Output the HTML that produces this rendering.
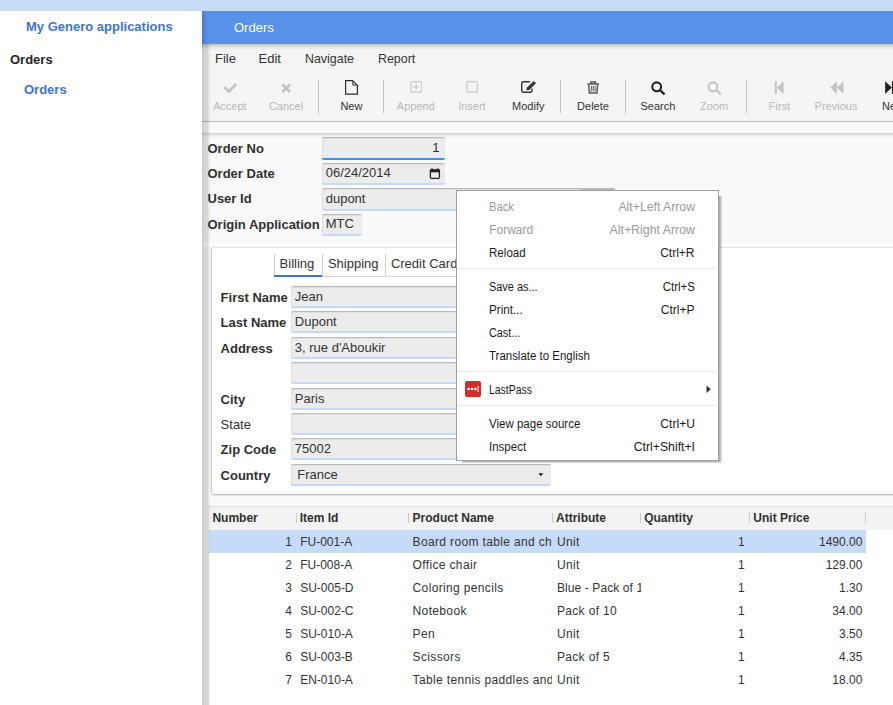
<!DOCTYPE html>
<html><head><meta charset="utf-8">
<style>
*{box-sizing:border-box;margin:0;padding:0}
html,body{width:893px;height:705px;overflow:hidden;background:#fff;font-family:"Liberation Sans",sans-serif;position:relative}
.a{position:absolute}
.t{position:absolute;white-space:nowrap}
</style></head><body>
<div class="a" style="left:0px;top:0px;width:893px;height:11px;background:#c7dcf7"></div>
<div class="a" style="left:0px;top:11px;width:202px;height:694px;background:#fff"></div>
<div class="t" style="left:26px;top:20.0px;font-size:13px;line-height:13px;font-weight:bold;color:#3f74d3;">My Genero applications</div>
<div class="t" style="left:10px;top:53.0px;font-size:13px;line-height:13px;font-weight:bold;color:#262626;">Orders</div>
<div class="t" style="left:24px;top:83.0px;font-size:13px;line-height:13px;font-weight:bold;color:#3f74d3;">Orders</div>
<div class="a" style="left:202px;top:11px;width:691px;height:694px;background:#f9f9f9"></div>
<div class="a" style="left:202px;top:11px;width:691px;height:33px;background:#5990ea"></div>
<div class="t" style="left:234px;top:21.0px;font-size:13px;line-height:13px;font-weight:normal;color:#fff;">Orders</div>
<div class="a" style="left:202px;top:44px;width:691px;height:77px;background:#f5f5f5"></div>
<div class="a" style="left:202px;top:44px;width:691px;height:6px;background:linear-gradient(rgba(0,0,0,.24),rgba(0,0,0,.1) 40%,rgba(0,0,0,0))"></div>
<div class="a" style="left:202px;top:121px;width:691px;height:1px;background:#b9b9b9"></div>
<div class="a" style="left:202px;top:122px;width:691px;height:11px;background:#fafafa"></div>
<div class="a" style="left:202px;top:133px;width:691px;height:5px;background:linear-gradient(rgba(0,0,0,.17),rgba(0,0,0,.05) 50%,rgba(0,0,0,0))"></div>
<div class="t" style="left:215px;top:52.0px;font-size:13px;line-height:13px;font-weight:normal;color:#333;">File</div>
<div class="t" style="left:258.5px;top:52.0px;font-size:13px;line-height:13px;font-weight:normal;color:#333;">Edit</div>
<div class="t" style="left:304.5px;top:52.0px;font-size:13px;line-height:13px;font-weight:normal;color:#333;transform:scaleX(.955);transform-origin:0 0">Navigate</div>
<div class="t" style="left:378px;top:52.0px;font-size:13px;line-height:13px;font-weight:normal;color:#333;transform:scaleX(.955);transform-origin:0 0">Report</div>
<div class="t" style="left:189.8px;width:80px;text-align:center;top:100.7px;font-size:11px;line-height:11px;color:#b8b8b8">Accept</div>
<div class="t" style="left:246px;width:80px;text-align:center;top:100.7px;font-size:11px;line-height:11px;color:#b8b8b8">Cancel</div>
<div class="t" style="left:311.4px;width:80px;text-align:center;top:100.7px;font-size:11px;line-height:11px;color:#333">New</div>
<div class="t" style="left:375.8px;width:80px;text-align:center;top:100.7px;font-size:11px;line-height:11px;color:#b8b8b8">Append</div>
<div class="t" style="left:431.9px;width:80px;text-align:center;top:100.7px;font-size:11px;line-height:11px;color:#b8b8b8">Insert</div>
<div class="t" style="left:488.29999999999995px;width:80px;text-align:center;top:100.7px;font-size:11px;line-height:11px;color:#333">Modify</div>
<div class="t" style="left:553px;width:80px;text-align:center;top:100.7px;font-size:11px;line-height:11px;color:#333">Delete</div>
<div class="t" style="left:617.9px;width:80px;text-align:center;top:100.7px;font-size:11px;line-height:11px;color:#333">Search</div>
<div class="t" style="left:674.1px;width:80px;text-align:center;top:100.7px;font-size:11px;line-height:11px;color:#b8b8b8">Zoom</div>
<div class="t" style="left:739.3px;width:80px;text-align:center;top:100.7px;font-size:11px;line-height:11px;color:#b8b8b8">First</div>
<div class="t" style="left:796px;width:80px;text-align:center;top:100.7px;font-size:11px;line-height:11px;color:#b8b8b8">Previous</div>
<div class="t" style="left:853.3px;width:80px;text-align:center;top:100.7px;font-size:11px;line-height:11px;color:#333">Next</div>
<div class="a" style="left:318px;top:80px;width:1px;height:33px;background:#c4c4c4"></div>
<div class="a" style="left:383px;top:80px;width:1px;height:33px;background:#c4c4c4"></div>
<div class="a" style="left:560px;top:80px;width:1px;height:33px;background:#c4c4c4"></div>
<div class="a" style="left:625px;top:80px;width:1px;height:33px;background:#c4c4c4"></div>
<div class="a" style="left:746px;top:80px;width:1px;height:33px;background:#c4c4c4"></div>
<svg class="a" style="left:0;top:0" width="893" height="705" viewBox="0 0 893 705">
<g fill="none" stroke-linecap="butt">
<path d="M224.6 87.2 L228.8 91.4 L236.2 84" stroke="#c2c2c2" stroke-width="2.6"/>
<path d="M282.3 84.4 L290 92 M290 84.4 L282.3 92" stroke="#c2c2c2" stroke-width="2.6"/>
<path d="M345.6 80.6 H352.6 L357.4 85.4 V94.1 H345.6 Z" stroke="#2a2a2a" stroke-width="1.2" stroke-linejoin="round"/>
<path d="M352.9 81.2 L352.9 85.1 L356.9 85.1" stroke="#2a2a2a" stroke-width="1"/>
<rect x="410.9" y="81.6" width="10.6" height="10.6" rx="2" stroke="#c8c8c8" stroke-width="1.2"/>
<path d="M416.2 83.8 V90 M413.1 86.9 H419.3" stroke="#c8c8c8" stroke-width="1.2"/>
<rect x="466.8" y="81.6" width="10.6" height="10.6" rx="2" stroke="#c8c8c8" stroke-width="1.2"/>
<path d="M530 81.8 H523.3 Q521.7 81.8 521.7 83.4 V90.6 Q521.7 92.2 523.3 92.2 H530.5 Q532.1 92.2 532.1 90.6 V88.5" stroke="#333" stroke-width="1.4"/>
<path d="M526.2 90.3 L527 87.6 L533.7 80.9 L536 83.2 L529.3 89.9 Z" fill="#333"/>
<path d="M587.3 84 H599 M590.8 84 V82 H595.5 V84" stroke="#555" stroke-width="1.3"/>
<path d="M588.7 84.5 L589.3 93 H597 L597.6 84.5" stroke="#555" stroke-width="1.4"/>
<path d="M591.3 86 V91.5 M593.2 86 V91.5 M595.1 86 V91.5" stroke="#555" stroke-width="1"/>
<circle cx="656.7" cy="86.8" r="4.4" stroke="#222" stroke-width="2.1"/>
<path d="M659.9 90 L664.6 94.4" stroke="#222" stroke-width="2.3"/>
<circle cx="712.9" cy="86.8" r="4.4" stroke="#c4c4c4" stroke-width="2.1"/>
<path d="M716.1 90 L720.8 94.4" stroke="#c4c4c4" stroke-width="2.3"/>
</g>
<g stroke="none">
<rect x="774.7" y="81.3" width="2.1" height="12.6" fill="#c4c4c4"/>
<path d="M783.6 81.3 V93.9 L776.8 87.6 Z" fill="#c4c4c4"/>
<path d="M837 81.3 V93.9 L830.2 87.6 Z M843.5 81.3 V93.9 L836.7 87.6 Z" fill="#c4c4c4"/>
<path d="M885.1 81.3 V93.9 L891.9 87.6 Z" fill="#222"/>
<rect x="891.9" y="81.3" width="2.1" height="12.6" fill="#222"/>
</g>
</svg>
<div class="t" style="left:207.5px;top:142.0px;font-size:13px;line-height:13px;font-weight:bold;color:#303030;">Order No</div>
<div class="t" style="left:207.5px;top:167.0px;font-size:13px;line-height:13px;font-weight:bold;color:#303030;">Order Date</div>
<div class="t" style="left:207.5px;top:192.0px;font-size:13px;line-height:13px;font-weight:bold;color:#303030;">User Id</div>
<div class="t" style="left:207.5px;top:217.5px;font-size:13px;line-height:13px;font-weight:bold;color:#303030;">Origin Application</div>
<div class="a" style="left:322px;top:137px;width:123px;height:23px;background:#ececec;border-radius:2px;border-top:1px solid #b9b9b9;border-bottom:2px solid #4b8bef;box-shadow:inset 1px 1px 1px rgba(0,0,0,.06)"></div>
<div class="t" style="left:39.60000000000002px;width:400px;text-align:right;top:141.0px;font-size:13px;line-height:13px;font-weight:normal;color:#333;">1</div>
<div class="a" style="left:322px;top:163px;width:123px;height:22px;background:#ececec;border-radius:2px;border-top:1px solid #b9b9b9;border-bottom:2px solid #c4daf7;box-shadow:inset 1px 1px 1px rgba(0,0,0,.06)"></div>
<div class="t" style="left:325.7px;top:166.0px;font-size:13px;line-height:13px;font-weight:normal;color:#333;">06/24/2014</div>
<svg class="a" style="left:0;top:0" width="893" height="705" viewBox="0 0 893 705">
<rect x="430.4" y="170" width="9" height="8.3" rx="1" fill="none" stroke="#222" stroke-width="1.3"/>
<rect x="429.8" y="169.5" width="10.2" height="2.8" fill="#222"/>
<path d="M431.3 168.3 h1.3 v1.5 h-1.3z M437.2 168.3 h1.3 v1.5 h-1.3z" fill="#222"/>
</svg>
<div class="a" style="left:322px;top:188px;width:293px;height:23px;background:#ececec;border-radius:2px;border-top:1px solid #b9b9b9;border-bottom:2px solid #c4daf7;box-shadow:inset 1px 1px 1px rgba(0,0,0,.06)"></div>
<div class="t" style="left:325.7px;top:192.0px;font-size:13px;line-height:13px;font-weight:normal;color:#333;">dupont</div>
<div class="a" style="left:580px;top:188px;width:35px;height:2px;background:#bbbbbb;border-top-right-radius:2px"></div>
<div class="a" style="left:322px;top:214px;width:40px;height:22px;background:#ececec;border-radius:2px;border-top:1px solid #b9b9b9;border-bottom:2px solid #c4daf7;box-shadow:inset 1px 1px 1px rgba(0,0,0,.06)"></div>
<div class="t" style="left:325.7px;top:217.0px;font-size:13px;line-height:13px;font-weight:normal;color:#333;">MTC</div>
<div class="a" style="left:202px;top:243px;width:691px;height:4px;background:#fff"></div>
<div class="a" style="left:212px;top:247px;width:700px;height:247px;background:#fff;border-radius:2px;border-top:1px solid #e2e2e2;box-shadow:0 1px 2px rgba(0,0,0,.3),-1px 0 1px rgba(0,0,0,.12)"></div>
<div class="a" style="left:274px;top:276px;width:444px;height:1px;background:#d5d5d5"></div>
<div class="a" style="left:274px;top:254px;width:1px;height:22px;background:#cfcfcf"></div>
<div class="a" style="left:322px;top:254px;width:1px;height:22px;background:#cfcfcf"></div>
<div class="a" style="left:385px;top:254px;width:1px;height:22px;background:#cfcfcf"></div>
<div class="a" style="left:274px;top:275px;width:48px;height:2px;background:#3f74d3"></div>
<div class="t" style="left:279.6px;top:257.0px;font-size:13px;line-height:13px;font-weight:normal;color:#333;">Billing</div>
<div class="t" style="left:327.9px;top:257.0px;font-size:13px;line-height:13px;font-weight:normal;color:#333;">Shipping</div>
<div class="t" style="left:390.9px;top:257.0px;font-size:13px;line-height:13px;font-weight:normal;color:#333;">Credit Card</div>
<div class="t" style="left:220.6px;top:290.5px;font-size:13px;line-height:13px;font-weight:bold;color:#303030;">First Name</div>
<div class="a" style="left:291px;top:286px;width:260px;height:22px;background:#ececec;border-radius:2px;border-top:1px solid #b9b9b9;border-bottom:2px solid #c4daf7;box-shadow:inset 1px 1px 1px rgba(0,0,0,.06)"></div>
<div class="t" style="left:294.8px;top:290.0px;font-size:13px;line-height:13px;font-weight:normal;color:#333;">Jean</div>
<div class="t" style="left:220.6px;top:315.5px;font-size:13px;line-height:13px;font-weight:bold;color:#303030;">Last Name</div>
<div class="a" style="left:291px;top:311px;width:260px;height:22px;background:#ececec;border-radius:2px;border-top:1px solid #b9b9b9;border-bottom:2px solid #c4daf7;box-shadow:inset 1px 1px 1px rgba(0,0,0,.06)"></div>
<div class="t" style="left:294.8px;top:315.0px;font-size:13px;line-height:13px;font-weight:normal;color:#333;">Dupont</div>
<div class="t" style="left:220.6px;top:341.5px;font-size:13px;line-height:13px;font-weight:bold;color:#303030;">Address</div>
<div class="a" style="left:291px;top:337px;width:260px;height:22px;background:#ececec;border-radius:2px;border-top:1px solid #b9b9b9;border-bottom:2px solid #c4daf7;box-shadow:inset 1px 1px 1px rgba(0,0,0,.06)"></div>
<div class="t" style="left:294.8px;top:341.0px;font-size:13px;line-height:13px;font-weight:normal;color:#333;">3, rue d'Aboukir</div>
<div class="a" style="left:291px;top:362px;width:260px;height:22px;background:#ececec;border-radius:2px;border-top:1px solid #b9b9b9;border-bottom:2px solid #c4daf7;box-shadow:inset 1px 1px 1px rgba(0,0,0,.06)"></div>
<div class="t" style="left:220.6px;top:392.5px;font-size:13px;line-height:13px;font-weight:bold;color:#303030;">City</div>
<div class="a" style="left:291px;top:388px;width:260px;height:22px;background:#ececec;border-radius:2px;border-top:1px solid #b9b9b9;border-bottom:2px solid #c4daf7;box-shadow:inset 1px 1px 1px rgba(0,0,0,.06)"></div>
<div class="t" style="left:294.8px;top:392.0px;font-size:13px;line-height:13px;font-weight:normal;color:#333;">Paris</div>
<div class="t" style="left:220.6px;top:417.5px;font-size:13px;line-height:13px;font-weight:normal;color:#303030;">State</div>
<div class="a" style="left:291px;top:413px;width:260px;height:22px;background:#ececec;border-radius:2px;border-top:1px solid #b9b9b9;border-bottom:2px solid #c4daf7;box-shadow:inset 1px 1px 1px rgba(0,0,0,.06)"></div>
<div class="t" style="left:220.6px;top:442.5px;font-size:13px;line-height:13px;font-weight:bold;color:#303030;">Zip Code</div>
<div class="a" style="left:291px;top:438px;width:260px;height:22px;background:#ececec;border-radius:2px;border-top:1px solid #b9b9b9;border-bottom:2px solid #c4daf7;box-shadow:inset 1px 1px 1px rgba(0,0,0,.06)"></div>
<div class="t" style="left:294.8px;top:442.0px;font-size:13px;line-height:13px;font-weight:normal;color:#333;">75002</div>
<div class="t" style="left:220.6px;top:468.5px;font-size:13px;line-height:13px;font-weight:bold;color:#303030;">Country</div>
<div class="a" style="left:291px;top:464px;width:260px;height:22px;background:#ececec;border-radius:2px;border-top:1px solid #b9b9b9;border-bottom:2px solid #c4daf7;box-shadow:inset 1px 1px 1px rgba(0,0,0,.06)"></div>
<div class="t" style="left:297.3px;top:468.0px;font-size:13px;line-height:13px;font-weight:normal;color:#333;">France</div>
<svg class="a" style="left:0;top:0" width="893" height="705" viewBox="0 0 893 705">
<path d="M538.4 473.2 H543.2 L540.8 476.2 Z" fill="#1a1a1a"/>
</svg>
<div class="a" style="left:208px;top:506px;width:700px;height:199px;background:#fff;border-top:1px solid #dcdcdc;border-left:1px solid #ececec"></div>
<div class="a" style="left:209px;top:507px;width:700px;height:23px;background:#f3f3f3"></div>
<div class="a" style="left:209px;top:530px;width:657px;height:23px;background:#c5dcf8"></div>
<div class="t" style="left:212.4px;top:511.5px;font-size:12px;line-height:12px;font-weight:bold;color:#303030;">Number</div>
<div class="t" style="left:299.7px;top:511.5px;font-size:12px;line-height:12px;font-weight:bold;color:#303030;">Item Id</div>
<div class="t" style="left:412.6px;top:511.5px;font-size:12px;line-height:12px;font-weight:bold;color:#303030;">Product Name</div>
<div class="t" style="left:556px;top:511.5px;font-size:12px;line-height:12px;font-weight:bold;color:#303030;">Attribute</div>
<div class="t" style="left:644.2px;top:511.5px;font-size:12px;line-height:12px;font-weight:bold;color:#303030;">Quantity</div>
<div class="t" style="left:753.3px;top:511.5px;font-size:12px;line-height:12px;font-weight:bold;color:#303030;">Unit Price</div>
<div class="a" style="left:296px;top:513px;width:1px;height:10px;background:#c8c8c8"></div>
<div class="a" style="left:408px;top:513px;width:1px;height:10px;background:#c8c8c8"></div>
<div class="a" style="left:552px;top:513px;width:1px;height:10px;background:#c8c8c8"></div>
<div class="a" style="left:640px;top:513px;width:1px;height:10px;background:#c8c8c8"></div>
<div class="a" style="left:749px;top:513px;width:1px;height:10px;background:#c8c8c8"></div>
<div class="a" style="left:865px;top:513px;width:1px;height:10px;background:#c8c8c8"></div>
<div class="t" style="left:-108px;width:400px;text-align:right;top:536.0px;font-size:12px;line-height:12px;font-weight:normal;color:#333;">1</div>
<div class="t" style="left:300.2px;top:536.0px;font-size:12px;line-height:12px;font-weight:normal;color:#333;">FU-001-A</div>
<div class="a" style="left:412px;top:531px;width:140px;height:20px;overflow:hidden">
<div class="t" style="left:0.6px;top:5.0px;font-size:12px;line-height:12px;font-weight:normal;color:#333;letter-spacing:.35px">Board room table and chairs</div>
</div>
<div class="a" style="left:556px;top:531px;width:85px;height:20px;overflow:hidden">
<div class="t" style="left:0.9px;top:5.0px;font-size:12px;line-height:12px;font-weight:normal;color:#333;letter-spacing:.35px">Unit</div>
</div>
<div class="t" style="left:344.79999999999995px;width:400px;text-align:right;top:536.0px;font-size:12px;line-height:12px;font-weight:normal;color:#333;">1</div>
<div class="t" style="left:462.4px;width:400px;text-align:right;top:536.0px;font-size:12px;line-height:12px;font-weight:normal;color:#333;">1490.00</div>
<div class="t" style="left:-108px;width:400px;text-align:right;top:559.0px;font-size:12px;line-height:12px;font-weight:normal;color:#333;">2</div>
<div class="t" style="left:300.2px;top:559.0px;font-size:12px;line-height:12px;font-weight:normal;color:#333;">FU-008-A</div>
<div class="a" style="left:412px;top:554px;width:140px;height:20px;overflow:hidden">
<div class="t" style="left:0.6px;top:5.0px;font-size:12px;line-height:12px;font-weight:normal;color:#333;letter-spacing:.35px">Office chair</div>
</div>
<div class="a" style="left:556px;top:554px;width:85px;height:20px;overflow:hidden">
<div class="t" style="left:0.9px;top:5.0px;font-size:12px;line-height:12px;font-weight:normal;color:#333;letter-spacing:.35px">Unit</div>
</div>
<div class="t" style="left:344.79999999999995px;width:400px;text-align:right;top:559.0px;font-size:12px;line-height:12px;font-weight:normal;color:#333;">1</div>
<div class="t" style="left:462.4px;width:400px;text-align:right;top:559.0px;font-size:12px;line-height:12px;font-weight:normal;color:#333;">129.00</div>
<div class="t" style="left:-108px;width:400px;text-align:right;top:582.0px;font-size:12px;line-height:12px;font-weight:normal;color:#333;">3</div>
<div class="t" style="left:300.2px;top:582.0px;font-size:12px;line-height:12px;font-weight:normal;color:#333;">SU-005-D</div>
<div class="a" style="left:412px;top:577px;width:140px;height:20px;overflow:hidden">
<div class="t" style="left:0.6px;top:5.0px;font-size:12px;line-height:12px;font-weight:normal;color:#333;letter-spacing:.35px">Coloring pencils</div>
</div>
<div class="a" style="left:556px;top:577px;width:85px;height:20px;overflow:hidden">
<div class="t" style="left:0.9px;top:5.0px;font-size:12px;line-height:12px;font-weight:normal;color:#333;letter-spacing:.1px">Blue - Pack of 12</div>
</div>
<div class="t" style="left:344.79999999999995px;width:400px;text-align:right;top:582.0px;font-size:12px;line-height:12px;font-weight:normal;color:#333;">1</div>
<div class="t" style="left:462.4px;width:400px;text-align:right;top:582.0px;font-size:12px;line-height:12px;font-weight:normal;color:#333;">1.30</div>
<div class="t" style="left:-108px;width:400px;text-align:right;top:605.0px;font-size:12px;line-height:12px;font-weight:normal;color:#333;">4</div>
<div class="t" style="left:300.2px;top:605.0px;font-size:12px;line-height:12px;font-weight:normal;color:#333;">SU-002-C</div>
<div class="a" style="left:412px;top:600px;width:140px;height:20px;overflow:hidden">
<div class="t" style="left:0.6px;top:5.0px;font-size:12px;line-height:12px;font-weight:normal;color:#333;letter-spacing:.35px">Notebook</div>
</div>
<div class="a" style="left:556px;top:600px;width:85px;height:20px;overflow:hidden">
<div class="t" style="left:0.9px;top:5.0px;font-size:12px;line-height:12px;font-weight:normal;color:#333;letter-spacing:.35px">Pack of 10</div>
</div>
<div class="t" style="left:344.79999999999995px;width:400px;text-align:right;top:605.0px;font-size:12px;line-height:12px;font-weight:normal;color:#333;">1</div>
<div class="t" style="left:462.4px;width:400px;text-align:right;top:605.0px;font-size:12px;line-height:12px;font-weight:normal;color:#333;">34.00</div>
<div class="t" style="left:-108px;width:400px;text-align:right;top:628.0px;font-size:12px;line-height:12px;font-weight:normal;color:#333;">5</div>
<div class="t" style="left:300.2px;top:628.0px;font-size:12px;line-height:12px;font-weight:normal;color:#333;">SU-010-A</div>
<div class="a" style="left:412px;top:623px;width:140px;height:20px;overflow:hidden">
<div class="t" style="left:0.6px;top:5.0px;font-size:12px;line-height:12px;font-weight:normal;color:#333;letter-spacing:.35px">Pen</div>
</div>
<div class="a" style="left:556px;top:623px;width:85px;height:20px;overflow:hidden">
<div class="t" style="left:0.9px;top:5.0px;font-size:12px;line-height:12px;font-weight:normal;color:#333;letter-spacing:.35px">Unit</div>
</div>
<div class="t" style="left:344.79999999999995px;width:400px;text-align:right;top:628.0px;font-size:12px;line-height:12px;font-weight:normal;color:#333;">1</div>
<div class="t" style="left:462.4px;width:400px;text-align:right;top:628.0px;font-size:12px;line-height:12px;font-weight:normal;color:#333;">3.50</div>
<div class="t" style="left:-108px;width:400px;text-align:right;top:651.0px;font-size:12px;line-height:12px;font-weight:normal;color:#333;">6</div>
<div class="t" style="left:300.2px;top:651.0px;font-size:12px;line-height:12px;font-weight:normal;color:#333;">SU-003-B</div>
<div class="a" style="left:412px;top:646px;width:140px;height:20px;overflow:hidden">
<div class="t" style="left:0.6px;top:5.0px;font-size:12px;line-height:12px;font-weight:normal;color:#333;letter-spacing:.35px">Scissors</div>
</div>
<div class="a" style="left:556px;top:646px;width:85px;height:20px;overflow:hidden">
<div class="t" style="left:0.9px;top:5.0px;font-size:12px;line-height:12px;font-weight:normal;color:#333;letter-spacing:.35px">Pack of 5</div>
</div>
<div class="t" style="left:344.79999999999995px;width:400px;text-align:right;top:651.0px;font-size:12px;line-height:12px;font-weight:normal;color:#333;">1</div>
<div class="t" style="left:462.4px;width:400px;text-align:right;top:651.0px;font-size:12px;line-height:12px;font-weight:normal;color:#333;">4.35</div>
<div class="t" style="left:-108px;width:400px;text-align:right;top:674.0px;font-size:12px;line-height:12px;font-weight:normal;color:#333;">7</div>
<div class="t" style="left:300.2px;top:674.0px;font-size:12px;line-height:12px;font-weight:normal;color:#333;">EN-010-A</div>
<div class="a" style="left:412px;top:669px;width:140px;height:20px;overflow:hidden">
<div class="t" style="left:0.6px;top:5.0px;font-size:12px;line-height:12px;font-weight:normal;color:#333;letter-spacing:.35px">Table tennis paddles and balls</div>
</div>
<div class="a" style="left:556px;top:669px;width:85px;height:20px;overflow:hidden">
<div class="t" style="left:0.9px;top:5.0px;font-size:12px;line-height:12px;font-weight:normal;color:#333;letter-spacing:.35px">Unit</div>
</div>
<div class="t" style="left:344.79999999999995px;width:400px;text-align:right;top:674.0px;font-size:12px;line-height:12px;font-weight:normal;color:#333;">1</div>
<div class="t" style="left:462.4px;width:400px;text-align:right;top:674.0px;font-size:12px;line-height:12px;font-weight:normal;color:#333;">18.00</div>
<div class="a" style="left:202px;top:44px;width:9px;height:661px;background:linear-gradient(to right,rgba(0,0,0,.22) 0px,rgba(0,0,0,.15) 1px,rgba(0,0,0,.14) 5px,rgba(0,0,0,.06) 7px,rgba(0,0,0,0) 9px)"></div>
<div class="a" style="left:202px;top:11px;width:6px;height:33px;background:linear-gradient(to right,rgba(0,0,0,.17),rgba(0,0,0,.08) 40%,rgba(0,0,0,0))"></div>
<div class="a" style="left:456px;top:190px;width:263px;height:271px;background:#fff;border:1px solid #a0a0a0"></div>
<div class="a" style="left:462px;top:461px;width:259px;height:2px;background:linear-gradient(rgba(0,0,0,.32),rgba(0,0,0,.12))"></div>
<div class="a" style="left:719px;top:196px;width:3px;height:265px;background:linear-gradient(to right,rgba(0,0,0,.34),rgba(0,0,0,.1))"></div>
<div class="t" style="left:489.2px;top:201.0px;font-size:12px;line-height:12px;font-weight:normal;color:#9a9a9a;transform:scaleX(0.93);transform-origin:0 0">Back</div>
<div class="t" style="left:294.5px;width:400px;text-align:right;top:201.0px;font-size:12px;line-height:12px;font-weight:normal;color:#9a9a9a;transform:scaleX(1.02);transform-origin:100% 0">Alt+Left Arrow</div>
<div class="t" style="left:489.2px;top:224.0px;font-size:12px;line-height:12px;font-weight:normal;color:#9a9a9a;transform:scaleX(1);transform-origin:0 0">Forward</div>
<div class="t" style="left:294.5px;width:400px;text-align:right;top:224.0px;font-size:12px;line-height:12px;font-weight:normal;color:#9a9a9a;transform:scaleX(1.03);transform-origin:100% 0">Alt+Right Arrow</div>
<div class="t" style="left:489.2px;top:247.0px;font-size:12px;line-height:12px;font-weight:normal;color:#1a1a1a;transform:scaleX(0.965);transform-origin:0 0">Reload</div>
<div class="t" style="left:294.5px;width:400px;text-align:right;top:247.0px;font-size:12px;line-height:12px;font-weight:normal;color:#1a1a1a;transform:scaleX(1);transform-origin:100% 0">Ctrl+R</div>
<div class="t" style="left:489.2px;top:281.0px;font-size:12px;line-height:12px;font-weight:normal;color:#1a1a1a;transform:scaleX(0.91);transform-origin:0 0">Save as...</div>
<div class="t" style="left:294.5px;width:400px;text-align:right;top:281.0px;font-size:12px;line-height:12px;font-weight:normal;color:#1a1a1a;transform:scaleX(0.96);transform-origin:100% 0">Ctrl+S</div>
<div class="t" style="left:489.2px;top:304.0px;font-size:12px;line-height:12px;font-weight:normal;color:#1a1a1a;transform:scaleX(0.975);transform-origin:0 0">Print...</div>
<div class="t" style="left:294.5px;width:400px;text-align:right;top:304.0px;font-size:12px;line-height:12px;font-weight:normal;color:#1a1a1a;transform:scaleX(1);transform-origin:100% 0">Ctrl+P</div>
<div class="t" style="left:489.2px;top:327.0px;font-size:12px;line-height:12px;font-weight:normal;color:#1a1a1a;transform:scaleX(0.9);transform-origin:0 0">Cast...</div>
<div class="t" style="left:489.2px;top:350.0px;font-size:12px;line-height:12px;font-weight:normal;color:#1a1a1a;transform:scaleX(0.955);transform-origin:0 0">Translate to English</div>
<div class="t" style="left:489.2px;top:384.0px;font-size:12px;line-height:12px;font-weight:normal;color:#1a1a1a;transform:scaleX(0.87);transform-origin:0 0">LastPass</div>
<div class="t" style="left:489.2px;top:418.0px;font-size:12px;line-height:12px;font-weight:normal;color:#1a1a1a;transform:scaleX(0.96);transform-origin:0 0">View page source</div>
<div class="t" style="left:294.5px;width:400px;text-align:right;top:418.0px;font-size:12px;line-height:12px;font-weight:normal;color:#1a1a1a;transform:scaleX(1.01);transform-origin:100% 0">Ctrl+U</div>
<div class="t" style="left:489.2px;top:441.0px;font-size:12px;line-height:12px;font-weight:normal;color:#1a1a1a;transform:scaleX(0.96);transform-origin:0 0">Inspect</div>
<div class="t" style="left:294.5px;width:400px;text-align:right;top:441.0px;font-size:12px;line-height:12px;font-weight:normal;color:#1a1a1a;transform:scaleX(1.02);transform-origin:100% 0">Ctrl+Shift+I</div>
<div class="a" style="left:458px;top:268px;width:258px;height:1px;background:#e9e9e9"></div>
<div class="a" style="left:458px;top:371px;width:258px;height:1px;background:#e9e9e9"></div>
<div class="a" style="left:458px;top:405px;width:258px;height:1px;background:#e9e9e9"></div>
<svg class="a" style="left:0;top:0" width="893" height="705" viewBox="0 0 893 705">
<rect x="465" y="381" width="16" height="16" rx="2" fill="#d32d27"/>
<circle cx="468.6" cy="389" r="1.3" fill="#fff"/><circle cx="472" cy="389" r="1.3" fill="#fff"/><circle cx="475.4" cy="389" r="1.3" fill="#fff"/>
<rect x="477.6" y="386" width="0.9" height="6" fill="#fff"/>
<path d="M706.5 385.6 L710.8 389.3 L706.5 393 Z" fill="#333"/>
</svg>
</body></html>
